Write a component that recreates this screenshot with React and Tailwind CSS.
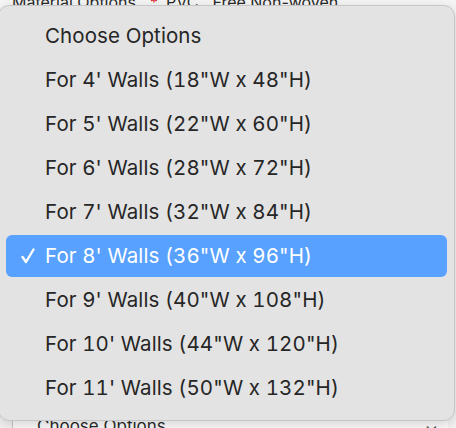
import React from "react";

const options = [
  "For 4' Walls (18\"W x 48\"H)",
  "For 5' Walls (22\"W x 60\"H)",
  "For 6' Walls (28\"W x 72\"H)",
  "For 7' Walls (32\"W x 84\"H)",
  "For 8' Walls (36\"W x 96\"H)",
  "For 9' Walls (40\"W x 108\"H)",
  "For 10' Walls (44\"W x 120\"H)",
  "For 11' Walls (50\"W x 132\"H)",
];

const selected = "For 8' Walls (36\"W x 96\"H)";

function Check() {
  return (
    <svg width="14" height="16" viewBox="0 0 14 16" fill="none">
      <path d="M1.5 9 L5 14 L12.5 1.5" stroke="white" strokeWidth="2.4" strokeLinecap="round" strokeLinejoin="round" />
    </svg>
  );
}

export default function App() {
  return (
    <div
      className="relative w-[456px] h-[428px] overflow-hidden bg-[#f6f6f6] text-[#2a2a2a]"
      style={{ fontFamily: "Inter, 'Noto Sans', sans-serif" }}
    >
      {/* page behind the menu */}
      <div className="flex flex-col h-full">
        <div className="flex items-center gap-2 pl-[12px] -mt-[8px] h-[20px] text-[16px]">
          <span>Material Options</span>
          <span className="text-[#d00] ml-[6px]">*</span>
          <span>PVC</span>
          <span className="ml-[6px]">Free Non-woven</span>
        </div>
        <div className="flex-1" />
        <div className="ml-[12px] mr-[8px] h-[20px] border-l border-[#c9c9c9] bg-white flex items-start justify-between pl-[24px] pr-[10px] text-[17px] leading-[20px] pt-[8px]">
          <span>Choose Options</span>
          <span className="text-[#555]">⌄</span>
        </div>
      </div>

      {/* dropdown menu */}
      <div className="absolute left-[-2px] top-[5px] w-[457px] h-[416px] rounded-[11px] bg-[#e3e3e3] border border-[#c6c6c6] shadow-[0_4px_14px_rgba(0,0,0,0.18)] pt-[8px] pb-[10px] text-[20.5px] tabular-nums tracking-[0.1px]">
        <div className="h-[44px] flex items-center pl-[46px] text-[#262626]">
          Choose Options
        </div>
        {options.map((o) =>
          o === selected ? (
            <div key={o} className="h-[44px] px-[7px] py-[1px]">
              <div className="h-full rounded-[6px] bg-[#58a1fe] flex items-center text-white">
                <span className="w-[39px] flex justify-center pl-[4px]">
                  <Check />
                </span>
                <span>{o}</span>
              </div>
            </div>
          ) : (
            <div key={o} className="h-[44px] flex items-center pl-[46px] text-[#262626]">
              {o}
            </div>
          )
        )}
      </div>
    </div>
  );
}
